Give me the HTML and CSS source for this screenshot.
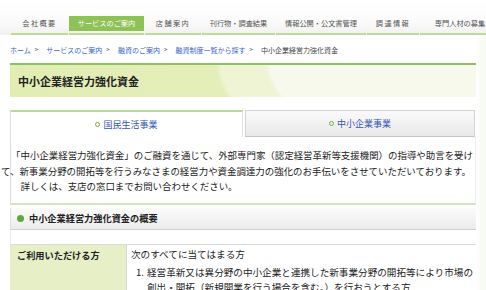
FILE: index.html
```html
<!DOCTYPE html>
<html lang="ja">
<head>
<meta charset="utf-8">
<title>中小企業経営力強化資金</title>
<link rel="stylesheet" href="styles.css">
</head>
<body>
<nav class="gnav">
  <ul class="gnav-list">
    <li class="sep"></li>
    <li class="gitem w1 sp"><a>会社概要</a></li>
    <li class="sep"></li>
    <li class="gitem w2 active"><a>サービスのご案内</a></li>
    <li class="sep"></li>
    <li class="gitem w3 sp"><a>店舗案内</a></li>
    <li class="sep"></li>
    <li class="gitem w4"><a>刊行物・調査結果</a></li>
    <li class="sep"></li>
    <li class="gitem w5"><a>情報公開・公文書管理</a></li>
    <li class="sep"></li>
    <li class="gitem w6 sp"><a>調達情報</a></li>
    <li class="sep"></li>
    <li class="gitem w7"><a>専門人材の募集</a></li>
  </ul>
</nav>

<main class="main">
  <div class="crumbs">
    <a>ホーム</a><span class="arr">&gt;</span><a>サービスのご案内</a><span class="arr">&gt;</span><a>融資のご案内</a><span class="arr">&gt;</span><a>融資制度一覧から探す</a><span class="arr">&gt;</span><span class="cur">中小企業経営力強化資金</span>
  </div>

  <h1 class="title">中小企業経営力強化資金</h1>

  <div class="tabs">
    <div class="tab on"><span class="ring"></span>国民生活事業</div>
    <div class="tab off"><span class="ring"></span>中小企業事業</div>
  </div>

  <div class="content">
    <div class="lead">
      <div class="l1">「中小企業経営力強化資金」のご融資を通じて、外部専門家（認定経営革新等支援機関）の指導や助言を受け</div>
      <div class="l2">て、新事業分野の開拓等を行うみなさまの経営力や資金調達力の強化のお手伝いをさせていただいております。</div>
    </div>
    <div class="l3">　詳しくは、支店の窓口までお問い合わせください。</div>
  </div>

  <h2 class="sec"><span class="dot"></span>中小企業経営力強化資金の概要</h2>
  <div class="spacer"></div>

  <div class="row">
    <div class="th">ご利用いただける方</div>
    <div class="td">
      <div class="td-head">次のすべてに当てはまる方</div>
      <div class="li"><span class="num">1.</span><span class="li-text">経営革新又は異分野の中小企業と連携した新事業分野の開拓等により市場の<br>創出・開拓（新規開業を行う場合を含む。）を行おうとする方</span></div>
    </div>
  </div>
</main>
</body>
</html>
```

FILE: styles.css
```css
* { box-sizing: border-box; }
html, body { margin: 0; padding: 0; }
body {
  width: 486px;
  height: 290px;
  overflow: hidden;
  background: linear-gradient(90deg, #ffffff 0, #ffffff 476px, #f6f9f0 486px);
  font-family: "Noto Sans CJK JP", "Noto Sans", sans-serif;
  color: #333;
}
ul { list-style: none; margin: 0; padding: 0; }
a { text-decoration: none; }

/* global nav */
.gnav {
  height: 35px;
  background: linear-gradient(#ffffff 0, #fbfbfb 60%, #f1f1f1 100%);
}
.gnav-list {
  display: flex;
  padding-left: 10px;
  height: 35px;
}
.sep {
  width: 1px;
  margin: 10px 1px 5px 0;
  background: #dcdcdc;
}
.gitem {
  padding-top: 16px;
  border-bottom: 2px solid #bddb98;
  height: 35px;
  flex: none;
}
.gitem a {
  display: block;
  height: 15px;
  line-height: 15px;
  font-size: 7.2px;
  color: #555;
  text-align: center;
  white-space: nowrap;
}
.gitem.sp a { letter-spacing: 1.4px; }
.gitem.active a {
  background: #8ec156;
  color: #fff;
}
.w1 { width: 57px; }
.w2 { width: 75px; }
.w3 { width: 56px; }
.w4 { width: 73px; }
.w5 { width: 90px; }
.w6 { width: 52px; }
.w7 { width: 80px; }

/* main column */
.main {
  margin-left: 10px;
  width: 466px;
}

.crumbs {
  height: 10px;
  margin: 10px 0 8px;
  font-size: 7px;
  line-height: 10px;
  white-space: nowrap;
  display: flex;
  align-items: center;
}
.crumbs a { color: #3a64c4; }
.crumbs .arr {
  color: #777;
  font-weight: bold;
  font-size: 6px;
  margin: 0 8px 0 4px;
}
.crumbs .cur { color: #444; }

.title {
  margin: 0;
  height: 34px;
  border-top: 2px solid #8dbf63;
  padding-left: 8px;
  font-size: 11px;
  font-weight: bold;
  color: #222;
  line-height: 32px;
  background:
    radial-gradient(ellipse 210px 90px at 100% 0%, #f7f9ec 0, #f7f9ec 98%, rgba(247,249,236,0) 100%),
    radial-gradient(ellipse 260px 110px at 100% 0%, #eef4d4 0, #eef4d4 98%, rgba(238,244,212,0) 100%),
    linear-gradient(90deg, #e2edb4, #e6efbf);
}

.tabs {
  display: flex;
  gap: 2px;
  margin-top: 13px;
  height: 27px;
}
.tab {
  height: 27px;
  display: flex;
  align-items: center;
  justify-content: center;
  gap: 3px;
  font-size: 9px;
  color: #3456b4;
}
.tab.on {
  width: 233px;
  border-top: 2px solid #b7da99;
  border-left: 1px solid #e2e2e2;
  border-right: 1px solid #e2e2e2;
  background: #fff;
}
.tab.off {
  width: 230px;
  border: 1px solid #d4d4d4;
  border-bottom-color: #c4c4c4;
  background: linear-gradient(#fafafa, #e9e9e9);
}
.ring {
  width: 5px;
  height: 5px;
  border: 1.5px solid #6fae3c;
  border-radius: 50%;
}

.content {
  height: 68px;
  border-left: 1px solid #dedede;
  border-right: 1px solid #eeeeee;
  border-bottom: 2px solid #d3e6bd;
  padding-top: 11px;
  font-size: 9.45px;
  line-height: 15.5px;
  color: #222;
  white-space: nowrap;
}
.lead { margin-left: -10px; }
.l1 { padding-left: 10px; }

.sec {
  margin: 3px 0 0;
  height: 22px;
  display: flex;
  align-items: center;
  gap: 5px;
  padding-left: 6px;
  padding-bottom: 1px;
  font-size: 9.2px;
  font-weight: bold;
  color: #222;
  border-left: 1px solid #e0e0e0;
  border-bottom: 1px solid #cfcfcf;
  background: linear-gradient(#fbfbfb, #ececec);
}
.dot {
  width: 7px;
  height: 7px;
  border-radius: 50%;
  background: #5ea83a;
}

.spacer {
  height: 15px;
  border-left: 1px solid #eeeeee;
  border-bottom: 1px solid #dadada;
}

.row {
  display: flex;
  height: 60px;
}
.th {
  width: 117px;
  background: #e7efc6;
  border-right: 1px solid #d8d8d8;
  padding: 3px 0 0 7px;
  font-size: 9.2px;
  font-weight: bold;
  line-height: 14px;
  color: #222;
}
.td {
  flex: 1;
  padding: 2px 0 0 4px;
  font-size: 9.6px;
  color: #222;
  white-space: nowrap;
}
.td-head { line-height: 15px; }
.li {
  display: flex;
  margin-top: 3px;
  padding-left: 5px;
  line-height: 15px;
}
.num { width: 11px; }
```
